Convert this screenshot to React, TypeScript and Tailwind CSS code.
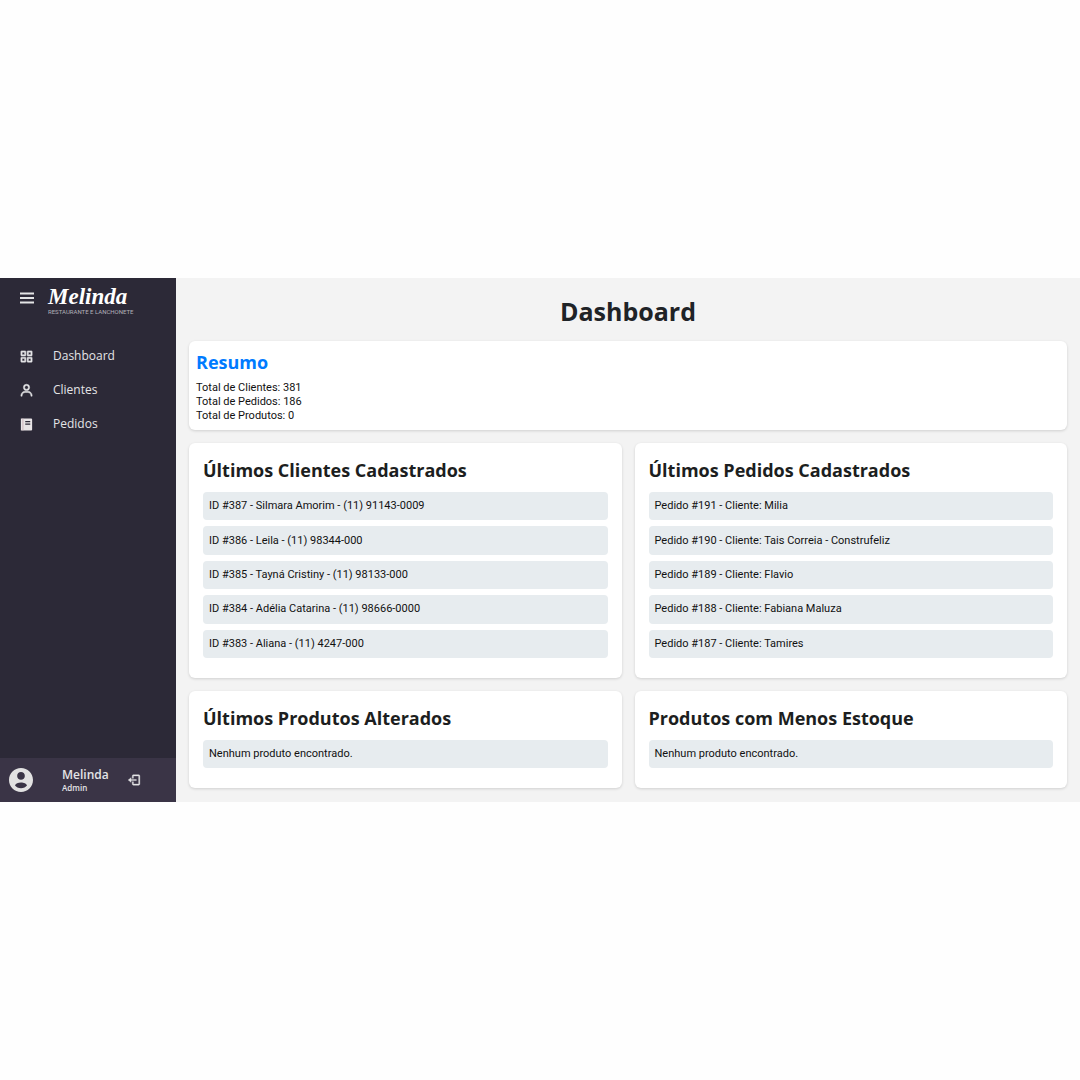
import React from 'react';

type PanelProps = { title: string; items: string[]; tall?: boolean };

const customers = [
  'ID #387 - Silmara Amorim - (11) 91143-0009',
  'ID #386 - Leila - (11) 98344-000',
  'ID #385 - Tayná Cristiny - (11) 98133-000',
  'ID #384 - Adélia Catarina - (11) 98666-0000',
  'ID #383 - Aliana - (11) 4247-000',
];

const orders = [
  'Pedido #191 - Cliente: Milia',
  'Pedido #190 - Cliente: Tais Correia - Construfeliz',
  'Pedido #189 - Cliente: Flavio',
  'Pedido #188 - Cliente: Fabiana Maluza',
  'Pedido #187 - Cliente: Tamires',
];

const summary = ['Total de Clientes: 381', 'Total de Pedidos: 186', 'Total de Produtos: 0'];

function MenuIcon() {
  return (
    <svg viewBox="0 0 14 12" className="h-3 w-3.5" fill="#e4e4e6" aria-hidden="true">
      <path d="M0 .5h14v2H0zM0 5h14v2H0zM0 9.500h14v2H0z" />
    </svg>
  );
}

function GridIcon() {
  return (
    <svg viewBox="0 0 24 24" className="size-[15px]" fill="#e4e4e6" stroke="#e4e4e6" strokeWidth="0.8" aria-hidden="true">
      <path d="M10 3H4a1 1 0 0 0-1 1v6a1 1 0 0 0 1 1h6a1 1 0 0 0 1-1V4a1 1 0 0 0-1-1zM9 9H5V5h4v4zm11-6h-6a1 1 0 0 0-1 1v6a1 1 0 0 0 1 1h6a1 1 0 0 0 1-1V4a1 1 0 0 0-1-1zm-1 6h-4V5h4v4zm-9 4H4a1 1 0 0 0-1 1v6a1 1 0 0 0 1 1h6a1 1 0 0 0 1-1v-6a1 1 0 0 0-1-1zm-1 6H5v-4h4v4zm11-6h-6a1 1 0 0 0-1 1v6a1 1 0 0 0 1 1h6a1 1 0 0 0 1-1v-6a1 1 0 0 0-1-1zm-1 6h-4v-4h4v4z" />
    </svg>
  );
}

function UserIcon() {
  return (
    <svg viewBox="0 0 24 24" className="size-[15px]" fill="#e4e4e6" stroke="#e4e4e6" strokeWidth="0.8" aria-hidden="true">
      <path d="M12 2a5 5 0 1 0 5 5 5 5 0 0 0-5-5zm0 8a3 3 0 1 1 3-3 3 3 0 0 1-3 3zm9 11v-1a7 7 0 0 0-7-7h-4a7 7 0 0 0-7 7v1h2v-1a5 5 0 0 1 5-5h4a5 5 0 0 1 5 5v1z" />
    </svg>
  );
}

function BookIcon() {
  return (
    <svg viewBox="0 0 24 24" className="size-[15px]" aria-hidden="true">
      <path fill="#e8e4e6" d="M3 2.500h16.500A1.500 1.500 0 0 1 21 4v16a1.500 1.500 0 0 1-1.500 1.500H3z" />
      <path fill="#c9b3ba" d="M5.500 2.500H7v19H5.500z" />
      <path fill="#2c2937" d="M10 6.500h8v2h-8zM10 10.500h8v2h-8z" />
    </svg>
  );
}

function AvatarIcon() {
  return (
    <svg viewBox="2 2 20 20" className="size-6" fill="#e2e2e2" aria-hidden="true">
      <path d="M12 2C6.480 2 2 6.480 2 12s4.480 10 10 10 10-4.480 10-10S17.520 2 12 2zm0 3.400c1.800 0 3.200 1.400 3.200 3.200s-1.400 3.200-3.200 3.200-3.200-1.400-3.200-3.200 1.400-3.200 3.200-3.200zm0 13.400c-2.200 0-4-.8-5-2.200.3-1.600 2.700-2.600 5-2.600s4.700 1 5 2.600c-1 1.400-2.800 2.200-5 2.200z" />
    </svg>
  );
}

function LogoutIcon() {
  return (
    <svg viewBox="0 0 24 24" className="size-3.5" fill="#e4e4e6" stroke="#e4e4e6" strokeWidth="0.6" aria-hidden="true">
      <path d="M16 13v-2H7V8l-5 4 5 4v-3z" />
      <path d="M20 3h-9c-1.103 0-2 .897-2 2v4h2V5h9v14h-9v-4H9v4c0 1.103.897 2 2 2h9c1.103 0 2-.897 2-2V5c0-1.103-.897-2-2-2z" />
    </svg>
  );
}

function Panel({ title, items, tall }: PanelProps) {
  return (
    <section className="rounded-md bg-white px-3.5 pt-3.5 pb-5 shadow-[0_1px_3px_rgba(0,0,0,0.15)]">
      <h2 className="text-[18px] leading-[26px] font-bold text-[#1c1e20]">{title}</h2>
      <ul className={tall ? 'mt-[9px] grid min-h-[166px] auto-rows-fr gap-1.5' : 'mt-[9px] grid'}>
        {items.map((item) => (
          <li key={item} className="flex items-center rounded-[4px] bg-[#e7ecef] px-1.5 py-1.5 font-['Roboto','Open_Sans',sans-serif] text-[11px] leading-4">
            {item}
          </li>
        ))}
      </ul>
    </section>
  );
}

const links = [
  { label: 'Dashboard', icon: <GridIcon /> },
  { label: 'Clientes', icon: <UserIcon /> },
  { label: 'Pedidos', icon: <BookIcon /> },
];

export default function App() {
  return (
    <div className="flex min-h-screen items-center bg-[#fefefe] font-['Open_Sans','Noto_Sans',sans-serif] text-[#111]">
      <div className="flex w-full">
        <aside className="flex w-44 shrink-0 flex-col bg-[#2c2937] text-[#e4e4e6]">
          <div className="flex items-start gap-3.5 pt-1.5 pl-5">
            <button type="button" aria-label="Menu" className="mt-2">
              <MenuIcon />
            </button>
            <div className="w-20">
              <div className="font-['Liberation_Serif',serif] text-[23px] leading-[25px] font-bold text-white italic">Melinda</div>
              <div className="font-['Roboto',sans-serif] text-[6px] leading-[6px] whitespace-nowrap text-[#b3b1b9]">RESTAURANTE E LANCHONETE</div>
            </div>
          </div>
          <nav className="mt-6 flex flex-col">
            {links.map((link) => (
              <a key={link.label} href="#" className="flex h-[34px] items-center gap-[19px] pl-[19px] text-[12px]">
                {link.icon}
                {link.label}
              </a>
            ))}
          </nav>
          <div className="mt-auto flex h-11 items-center bg-[#3a3446] pl-[9px]">
            <AvatarIcon />
            <div className="ml-[29px] w-[65px]">
              <div className="text-[12px] leading-4 font-semibold">Melinda</div>
              <div className="text-[8px] leading-[10px] font-semibold">Admin</div>
            </div>
            <button type="button" aria-label="Sair">
              <LogoutIcon />
            </button>
          </div>
        </aside>
        <main className="min-w-0 flex-1 bg-[#f3f3f3] px-[13px] pb-3.5">
          <h1 className="pt-4 pb-3 text-center text-[25px] leading-[35px] font-bold text-[#1f2327]">Dashboard</h1>
          <section className="rounded-md bg-white px-[7px] pt-2 pb-[7px] shadow-[0_1px_3px_rgba(0,0,0,0.15)]">
            <h2 className="text-[18px] leading-[26px] font-bold text-[#007bff]">Resumo</h2>
            <div className="mt-[6px] font-['Roboto','Open_Sans',sans-serif] text-[11px] leading-[14px]">
              {summary.map((line) => (
                <p key={line}>{line}</p>
              ))}
            </div>
          </section>
          <div className="mt-[13px] grid grid-cols-2 gap-[13px]">
            <Panel title="Últimos Clientes Cadastrados" items={customers} tall />
            <Panel title="Últimos Pedidos Cadastrados" items={orders} tall />
            <Panel title="Últimos Produtos Alterados" items={['Nenhum produto encontrado.']} />
            <Panel title="Produtos com Menos Estoque" items={['Nenhum produto encontrado.']} />
          </div>
        </main>
      </div>
    </div>
  );
}
